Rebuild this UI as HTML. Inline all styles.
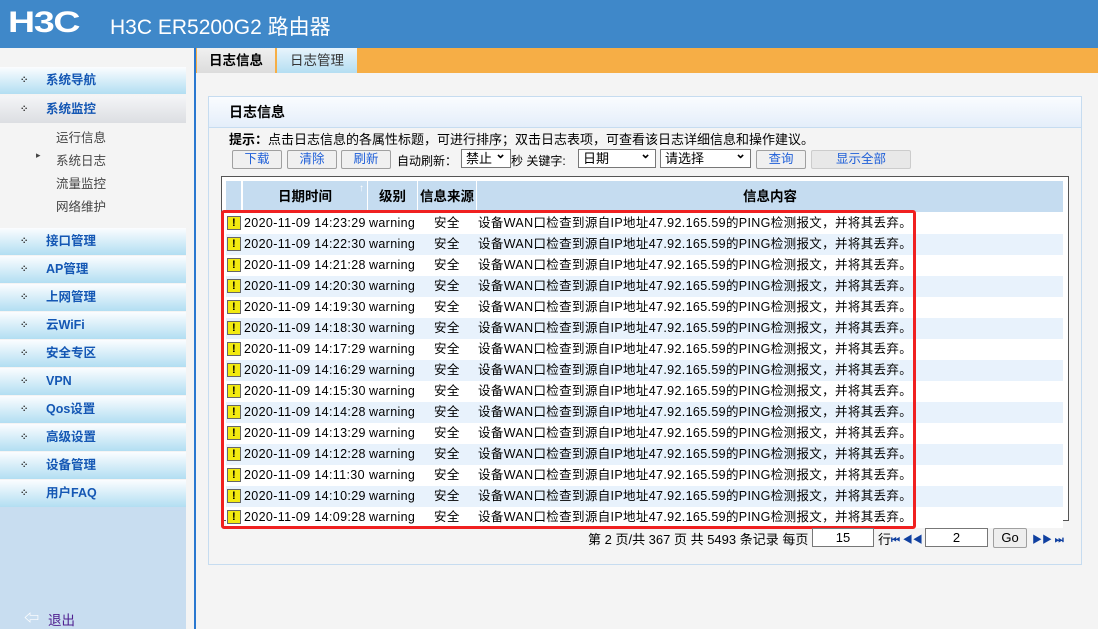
<!DOCTYPE html>
<html><head><meta charset="utf-8"><style>
*{margin:0;padding:0;box-sizing:border-box}
body{width:1098px;height:629px;overflow:hidden;background:#f4f4f4;font-family:"Liberation Sans","Noto Sans CJK SC",sans-serif;font-size:13px;position:relative;color:#000}
.hdr{position:absolute;left:0;top:0;width:1098px;height:48px;background:#3f88c9;color:#fff}
.logo{position:absolute;left:8px;top:6px;font-size:30px;font-weight:bold;letter-spacing:-1px;font-family:"Liberation Sans",sans-serif;transform:scaleX(1.25);transform-origin:left}
.title{position:absolute;left:110px;top:11px;font-size:21px}
.side{position:absolute;left:0;top:48px;width:186px;height:581px;background:#f4f4f4}
.sidebot{position:absolute;left:0;top:505px;width:186px;height:124px;background:#c8ddf0}
.vline{position:absolute;left:194px;top:48px;width:2px;height:581px;background:#2a78d0}
.m{position:absolute;left:0;width:186px;height:27px;background:linear-gradient(#fbfdff,#b2def2);color:#1457b4;font-weight:bold;font-size:12.5px;line-height:27px;padding-left:46px}
.m:before{content:"⁘";position:absolute;left:20px;top:0;color:#333;font-size:10px}
.m.g{background:linear-gradient(#f4f5f7,#dcdee2)}
.sub{position:absolute;left:56px;font-size:12.5px;color:#444}
.tabbar{position:absolute;left:196px;top:48px;width:902px;height:25px;background:#f6ae46}
.tab{position:absolute;top:48px;height:25px;line-height:25px;text-align:center;font-size:13.5px}
.panel{position:absolute;left:208px;top:96px;width:874px;height:469px;border:1px solid #c6dcf0;background:#f4f4f4}
.ptitle{height:31px;background:linear-gradient(#fafcff,#e4eefa);border-bottom:1px solid #c6dcf0;font-weight:bold;font-size:14px;line-height:31px;padding-left:20px}
.btn{position:absolute;top:150px;height:19px;border:1px solid #a0a0a0;border-radius:2px;background:#f0f0f0;color:#2060d8;text-align:center;font-size:12.5px;line-height:17px}
.sel{position:absolute;top:149px;height:19px;border:1px solid #777;background:#fff;font-size:13px;line-height:17px;padding-left:4px}
.sel:after{content:"⌄";position:absolute;right:4px;top:-5px;font-weight:bold}
.tbl{position:absolute;left:221px;top:176px;width:848px;height:345px;border:1px solid #555;background:#fff}
.thd{position:absolute;top:181px;height:31px;background:#c5dcf0;font-weight:bold;font-size:13.5px;line-height:31px;text-align:center}
.row{position:absolute;left:226px;width:837px;height:21px;font-size:12.5px;line-height:21px;white-space:nowrap;letter-spacing:0.35px}
.row span{position:absolute;top:0}
.ic{position:absolute;left:1px;top:3px;width:14px;height:14px;background:#f2ea10;border:1px solid #666;font-size:11px;line-height:12px;text-align:center;font-weight:bold}
.red{position:absolute;left:221px;top:210px;width:695px;height:319px;border:3px solid #f02020;border-radius:3px}
.pg{position:absolute;top:529px;font-size:13px}
.inp{position:absolute;top:528px;height:19px;border:1px solid #777;background:#fff;text-align:center;font-size:13px;line-height:17px}
.nav{position:absolute;top:531px;color:#1040a0;font-size:10px;font-weight:bold}
</style></head><body>
<div class="hdr"><div class="logo">H3C</div><div class="title">H3C ER5200G2 路由器</div></div>
<div class="side"></div><div class="sidebot"></div>
<div class="m" style="top:67px">系统导航</div>
<div class="m g" style="top:96px">系统监控</div>
<div class="sub" style="top:127px">运行信息</div>
<div class="sub" style="top:150px"><span style="position:absolute;left:-20px;font-size:9px">▸</span>系统日志</div>
<div class="sub" style="top:173px">流量监控</div>
<div class="sub" style="top:196px">网络维护</div>
<div class="m" style="top:228px">接口管理</div>
<div class="m" style="top:256px">AP管理</div>
<div class="m" style="top:284px">上网管理</div>
<div class="m" style="top:312px">云WiFi</div>
<div class="m" style="top:340px">安全专区</div>
<div class="m" style="top:368px">VPN</div>
<div class="m" style="top:396px">Qos设置</div>
<div class="m" style="top:424px">高级设置</div>
<div class="m" style="top:452px">设备管理</div>
<div class="m" style="top:480px">用户FAQ</div>
<div style="position:absolute;left:24px;top:607px;color:#fff;font-size:15px;font-weight:bold">⇦</div>
<div style="position:absolute;left:48px;top:609px;color:#502090;font-size:13.5px">退出</div>
<div class="vline"></div>
<div class="tabbar"></div>
<div class="tab" style="left:197px;width:78px;background:linear-gradient(#f0f0f0,#dcdcdc);font-weight:bold">日志信息</div>
<div class="tab" style="left:277px;width:80px;background:linear-gradient(#e8f4fc,#b4def2);color:#333">日志管理</div>
<div class="panel"><div class="ptitle">日志信息</div>
<div style="padding:1px 0 0 20px;font-size:13px"><b>提示：</b>点击日志信息的各属性标题，可进行排序；双击日志表项，可查看该日志详细信息和操作建议。</div></div>
<div class="btn" style="left:232px;width:50px">下载</div>
<div class="btn" style="left:287px;width:50px">清除</div>
<div class="btn" style="left:341px;width:50px">刷新</div>
<div style="position:absolute;left:397px;top:152px;font-size:12px">自动刷新：</div>
<div class="sel" style="left:461px;width:50px">禁止</div>
<div style="position:absolute;left:511px;top:152px;font-size:12px">秒 关键字:</div>
<div class="sel" style="left:578px;width:78px">日期</div>
<div class="sel" style="left:660px;width:91px">请选择</div>
<div class="btn" style="left:756px;width:50px">查询</div>
<div class="btn" style="left:811px;width:100px;background:#e8e8e8;border-color:#ccc">显示全部</div>
<div class="tbl"></div>
<div class="thd" style="left:226px;width:15px"></div>
<div class="thd" style="left:243px;width:124px">日期时间<span style="position:absolute;right:3px;top:-8px;color:#fff;font-size:10px">↑</span></div>
<div class="thd" style="left:368px;width:49px">级别</div>
<div class="thd" style="left:418px;width:58px">信息来源</div>
<div class="thd" style="left:477px;width:586px">信息内容</div>
<div id="rows"></div>
<script>
var t=["14:23:29","14:22:30","14:21:28","14:20:30","14:19:30","14:18:30","14:17:29","14:16:29","14:15:30","14:14:28","14:13:29","14:12:28","14:11:30","14:10:29","14:09:28"],h="";
for(var i=0;i<15;i++){h+='<div class="row" style="top:'+(213+i*21)+'px;background:'+(i%2?'#e8f2fc':'#fff')+'"><div class="ic">!</div><span style="left:18px">2020-11-09 '+t[i]+'</span><span style="left:143px">warning</span><span style="left:208px">安全</span><span style="left:252px">设备WAN口检查到源自IP地址47.92.165.59的PING检测报文，并将其丢弃。</span></div>';}
document.getElementById("rows").innerHTML=h;
</script>
<div class="red"></div>
<div class="pg" style="left:588px">第 2 页/共 367 页 共 5493 条记录 每页</div>
<div class="inp" style="left:812px;width:62px">15</div>
<div class="pg" style="left:878px">行</div>
<div class="nav" style="left:891px">⏮ ◀◀</div>
<div class="inp" style="left:925px;width:63px">2</div>
<div class="btn" style="left:993px;top:528px;width:34px;height:20px;color:#000;font-size:13px;background:#eee">Go</div>
<div class="nav" style="left:1032px">▶▶ ⏭</div>
</body></html>
